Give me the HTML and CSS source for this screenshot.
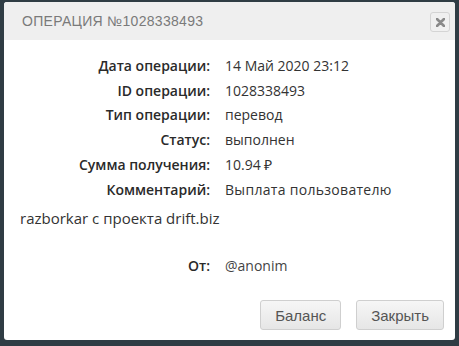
FILE: index.html
```html
<!DOCTYPE html>
<html lang="ru">
<head>
<meta charset="utf-8">
<link rel="stylesheet" href="styles.css">
</head>
<body>
<div class="dialog">
  <div class="header">
    <div class="title">ОПЕРАЦИЯ №1028338493</div>
    <button class="close" aria-label="Закрыть"><svg width="9" height="9" viewBox="0 0 9 9"><path d="M1 1L8 8M8 1L1 8" stroke="#8a8a8a" stroke-width="2.6" stroke-linecap="round"/></svg></button>
  </div>
  <div class="content">
    <div class="rows">
      <div class="label">Дата операции:</div><div class="value">14 Май 2020 23:12</div>
      <div class="label">ID операции:</div><div class="value">1028338493</div>
      <div class="label">Тип операции:</div><div class="value">перевод</div>
      <div class="label">Статус:</div><div class="value">выполнен</div>
      <div class="label">Сумма получения:</div><div class="value">10.94 ₽</div>
      <div class="label">Комментарий:</div><div class="value wide">Выплата пользователю</div>
    </div>
    <div class="comment">razborkar с проекта drift.biz</div>
    <div class="from"><span class="from-label">От:</span><span class="from-value">@anonim</span></div>
  </div>
  <div class="footer">
    <button class="btn">Баланс</button>
    <button class="btn">Закрыть</button>
  </div>
</div>
</body>
</html>
```
FILE: styles.css
```css
html, body {
  margin: 0;
  padding: 0;
}
body {
  background: #2f3c44;
  width: 459px;
  height: 346px;
  overflow: hidden;
  font-family: "Open Sans", sans-serif;
}
.dialog {
  margin: 2px 4px 0 4px;
  width: 451px;
  height: 338px;
  background: #ffffff;
  border-radius: 3px;
  display: flex;
  flex-direction: column;
  overflow: hidden;
}
.header {
  height: 38px;
  background: #efefef;
  display: flex;
  align-items: center;
  justify-content: space-between;
  padding: 0 5px 0 18px;
}
.title {
  font-family: "Liberation Sans", Arial, sans-serif;
  font-size: 14px;
  letter-spacing: 0.3px;
  color: #7a7a7a;
}
.close {
  width: 20px;
  height: 20px;
  padding: 0;
  border: 1px solid #d4d4d4;
  border-radius: 3px;
  background: #f0f0f0;
  display: flex;
  align-items: center;
  justify-content: center;
  margin-top: 2px;
}
.content {
  padding: 14px 0 0 15px;
  flex: 1;
}
.rows {
  display: grid;
  grid-template-columns: 191px auto;
  column-gap: 15px;
  row-gap: 0;
  font-size: 14px;
  line-height: 24.7px;
  color: #222;
}
.label {
  text-align: right;
  font-weight: 600;
  color: #2a2a2a;
}
.value {
  color: #333;
}
.wide {
  letter-spacing: 0.3px;
}
.comment {
  font-size: 15px;
  line-height: 24px;
  color: #333;
  margin-top: 4px;
  padding-left: 1px;
}
.from {
  margin-top: 24px;
  display: grid;
  grid-template-columns: 191px auto;
  column-gap: 15px;
  font-size: 14px;
  line-height: 24px;
}
.from-label {
  text-align: right;
  font-weight: 600;
  color: #2a2a2a;
}
.from-value {
  color: #444;
}
.footer {
  display: flex;
  justify-content: flex-end;
  gap: 15px;
  padding: 0 11px 10px 0;
}
.btn {
  height: 30px;
  padding: 0 14px;
  border: 1px solid #cfcfcf;
  border-radius: 3px;
  background: linear-gradient(#f6f6f6, #e6e6e6);
  font-family: "Liberation Sans", Arial, sans-serif;
  font-size: 15px;
  color: #555;
}
```
